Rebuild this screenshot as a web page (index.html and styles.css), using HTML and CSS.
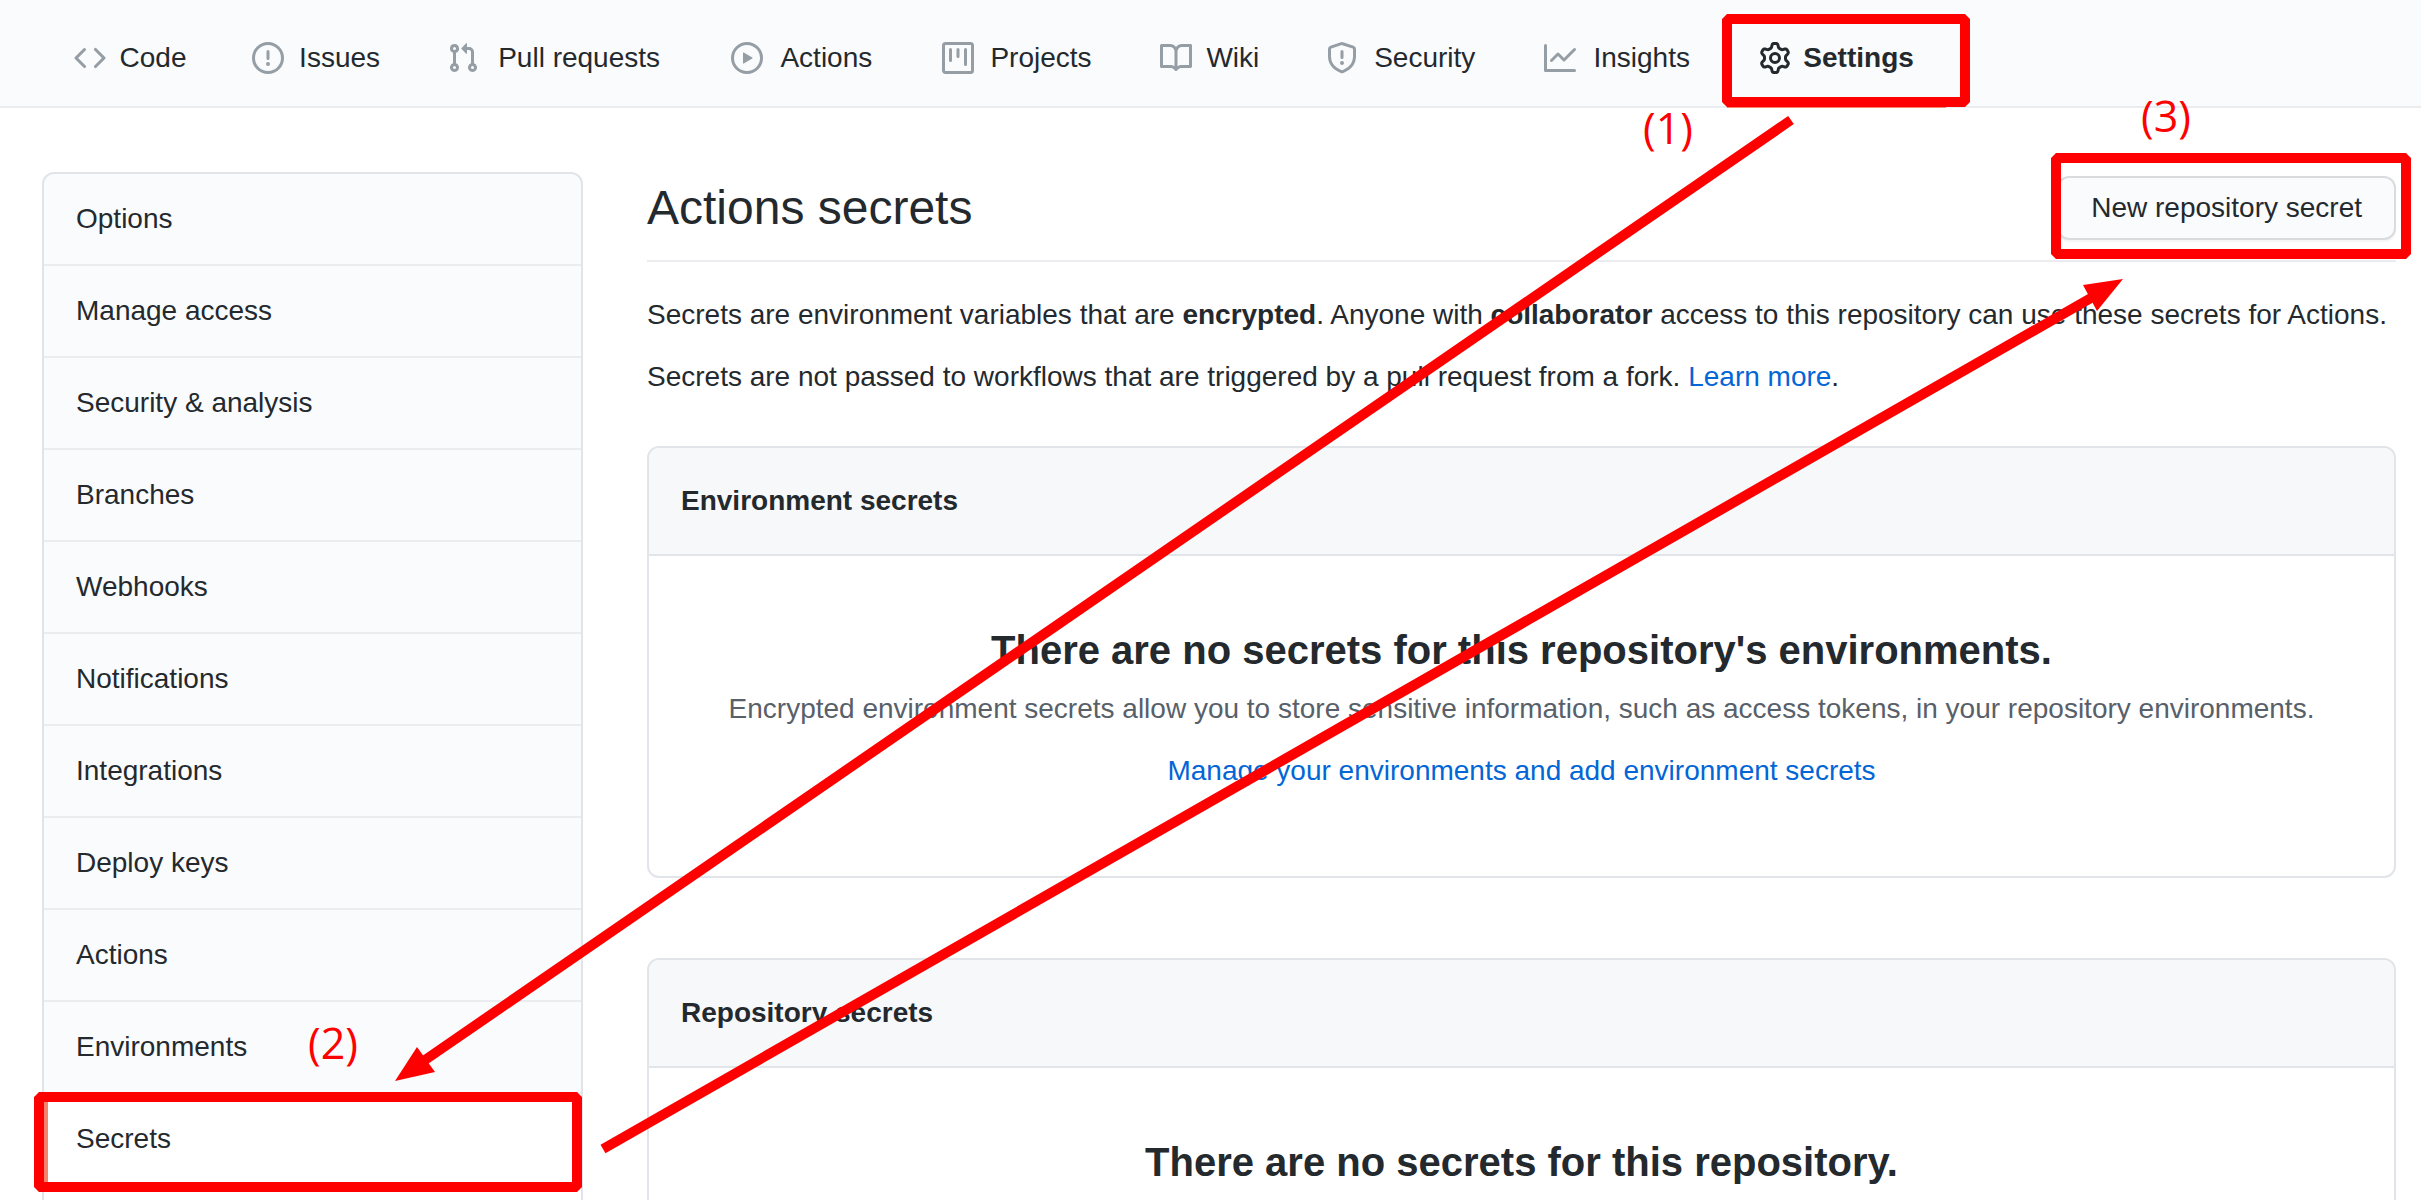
FILE: index.html
```html
<!DOCTYPE html>
<html lang="en">
<head>
<meta charset="utf-8">
<title>Actions secrets</title>
<link rel="stylesheet" href="styles.css">
</head>
<body>
<div class="page">
  <header class="repo-head">
    <nav class="tabs" aria-label="Repository">
      <a class="tab" href="#code"><svg class="icon" viewBox="0 0 16 16" aria-hidden="true"><path d="M4.72 3.22a.75.75 0 011.06 1.06L2.06 8l3.72 3.72a.75.75 0 11-1.06 1.06L.47 8.53a.75.75 0 010-1.06l4.25-4.25zm6.56 0a.75.75 0 10-1.06 1.06L13.94 8l-3.72 3.72a.75.75 0 101.06 1.06l4.25-4.25a.75.75 0 000-1.06l-4.25-4.25z"/></svg><span class="tab-label" data-content="Code">Code</span></a>
      <a class="tab" href="#issues"><svg class="icon" viewBox="0 0 16 16" aria-hidden="true"><path fill-rule="evenodd" d="M8 1.5a6.5 6.5 0 100 13 6.5 6.5 0 000-13zM0 8a8 8 0 1116 0A8 8 0 010 8zm9 3a1 1 0 11-2 0 1 1 0 012 0zm-.25-6.25a.75.75 0 00-1.5 0v3.5a.75.75 0 001.5 0v-3.5z"/></svg><span class="tab-label" data-content="Issues">Issues</span></a>
      <a class="tab" href="#pulls"><svg class="icon" viewBox="0 0 16 16" aria-hidden="true"><path fill-rule="evenodd" d="M7.177 3.073L9.573.677A.25.25 0 0110 .854v4.792a.25.25 0 01-.427.177L7.177 3.427a.25.25 0 010-.354zM3.75 2.5a.75.75 0 100 1.5.75.75 0 000-1.5zm-2.25.75a2.25 2.25 0 113 2.122v5.256a2.251 2.251 0 11-1.5 0V5.372A2.25 2.25 0 011.5 3.25zM11 2.5h-1V4h1a1 1 0 011 1v5.628a2.251 2.251 0 101.5 0V5A2.5 2.5 0 0011 2.5zm1 10.25a.75.75 0 111.5 0 .75.75 0 01-1.5 0zM3.75 12a.75.75 0 100 1.5.75.75 0 000-1.5z"/></svg><span class="tab-label" data-content="Pull requests">Pull requests</span></a>
      <a class="tab" href="#actions"><svg class="icon" viewBox="0 0 16 16" aria-hidden="true"><path fill-rule="evenodd" d="M1.5 8a6.5 6.5 0 1113 0 6.5 6.5 0 01-13 0zM8 0a8 8 0 100 16A8 8 0 008 0zM6.379 5.227A.25.25 0 006 5.442v5.117a.25.25 0 00.379.214l4.264-2.559a.25.25 0 000-.428L6.379 5.227z"/></svg><span class="tab-label" data-content="Actions">Actions</span></a>
      <a class="tab" href="#projects"><svg class="icon" viewBox="0 0 16 16" aria-hidden="true"><path fill-rule="evenodd" d="M1.75 0A1.75 1.75 0 000 1.75v12.5C0 15.216.784 16 1.75 16h12.5A1.75 1.75 0 0016 14.25V1.75A1.75 1.75 0 0014.25 0H1.75zM1.5 1.75a.25.25 0 01.25-.25h12.5a.25.25 0 01.25.25v12.5a.25.25 0 01-.25.25H1.75a.25.25 0 01-.25-.25V1.75zM11.75 3a.75.75 0 00-.75.75v7.5a.75.75 0 001.5 0v-7.5a.75.75 0 00-.75-.75zm-8.25.75a.75.75 0 011.5 0v5.5a.75.75 0 01-1.5 0v-5.5zM8 3a.75.75 0 00-.75.75v3.5a.75.75 0 001.5 0v-3.5A.75.75 0 008 3z"/></svg><span class="tab-label" data-content="Projects">Projects</span></a>
      <a class="tab" href="#wiki"><svg class="icon" viewBox="0 0 16 16" aria-hidden="true"><path fill-rule="evenodd" d="M0 1.75A.75.75 0 01.75 1h4.253c1.227 0 2.317.59 3 1.501A3.744 3.744 0 0111.006 1h4.245a.75.75 0 01.75.75v10.5a.75.75 0 01-.75.75h-4.507a2.25 2.25 0 00-1.591.659l-.622.621a.75.75 0 01-1.06 0l-.622-.621A2.25 2.25 0 005.258 13H.75a.75.75 0 01-.75-.75V1.75zm8.755 3a2.25 2.25 0 012.25-2.25H14.5v9h-3.757c-.71 0-1.4.201-1.992.572l.004-7.322zm-1.504 7.324l.004-5.073-.002-2.253A2.25 2.25 0 005.003 2.5H1.5v9h3.757a3.75 3.75 0 011.994.574z"/></svg><span class="tab-label" data-content="Wiki">Wiki</span></a>
      <a class="tab" href="#security"><svg class="icon" viewBox="0 0 16 16" aria-hidden="true"><path fill-rule="evenodd" d="M7.467.133a1.75 1.75 0 011.066 0l5.25 1.68A1.75 1.75 0 0115 3.48V7c0 1.566-.32 3.182-1.303 4.682-.983 1.498-2.585 2.813-5.032 3.855a1.7 1.7 0 01-1.33 0c-2.447-1.042-4.049-2.357-5.032-3.855C1.32 10.182 1 8.566 1 7V3.48a1.75 1.75 0 011.217-1.667l5.25-1.68zm.61 1.429a.25.25 0 00-.153 0l-5.25 1.68a.25.25 0 00-.174.238V7c0 1.358.275 2.666 1.057 3.86.784 1.194 2.121 2.34 4.366 3.297a.2.2 0 00.154 0c2.245-.956 3.582-2.104 4.366-3.298C13.225 9.666 13.5 8.36 13.5 7V3.48a.25.25 0 00-.174-.237l-5.25-1.68zM9 10.5a1 1 0 11-2 0 1 1 0 012 0zm-.25-5.75a.75.75 0 10-1.5 0v3a.75.75 0 001.5 0v-3z"/></svg><span class="tab-label" data-content="Security">Security</span></a>
      <a class="tab" href="#insights"><svg class="icon" viewBox="0 0 16 16" aria-hidden="true"><path fill-rule="evenodd" d="M1.5 1.75a.75.75 0 00-1.5 0v12.5c0 .414.336.75.75.75h14.5a.75.75 0 000-1.5H1.5V1.75zm14.28 2.53a.75.75 0 00-1.06-1.06L10 7.94 7.53 5.47a.75.75 0 00-1.06 0L3.22 8.72a.75.75 0 001.06 1.06L7 7.06l2.47 2.47a.75.75 0 001.06 0l5.25-5.25z"/></svg><span class="tab-label" data-content="Insights">Insights</span></a>
      <a class="tab selected" href="#settings" aria-current="page"><svg class="icon" viewBox="0 0 16 16" aria-hidden="true"><path fill-rule="evenodd" d="M7.429 1.525a6.593 6.593 0 011.142 0c.036.003.108.036.137.146l.289 1.105c.147.56.55.967.997 1.189.174.086.341.183.501.29.417.278.97.423 1.53.27l1.102-.303c.11-.03.175.016.195.046.219.31.41.641.573.989.014.031.022.11-.059.19l-.815.806c-.411.406-.562.957-.53 1.456a4.588 4.588 0 010 .582c-.032.499.119 1.05.53 1.456l.815.806c.08.08.073.159.059.19a6.494 6.494 0 01-.573.99c-.02.029-.086.074-.195.045l-1.103-.303c-.559-.153-1.112-.008-1.529.27-.16.107-.327.204-.5.29-.449.222-.851.628-.998 1.189l-.289 1.105c-.029.11-.101.143-.137.146a6.613 6.613 0 01-1.142 0c-.036-.003-.108-.037-.137-.146l-.289-1.105c-.147-.56-.55-.967-.997-1.189a4.502 4.502 0 01-.501-.29c-.417-.278-.97-.423-1.53-.27l-1.102.303c-.11.03-.175-.016-.195-.046a6.492 6.492 0 01-.573-.989c-.014-.031-.022-.11.059-.19l.815-.806c.411-.406.562-.957.53-1.456a4.587 4.587 0 010-.582c.032-.499-.119-1.05-.53-1.456l-.815-.806c-.08-.08-.073-.159-.059-.19a6.44 6.44 0 01.573-.99c.02-.029.086-.075.195-.045l1.103.303c.559.153 1.112.008 1.529-.27.16-.107.327-.204.5-.29.449-.222.851-.628.998-1.189l.289-1.105c.029-.11.101-.143.137-.146zM8 0c-.236 0-.47.01-.701.03-.743.065-1.29.615-1.458 1.261l-.29 1.106c-.017.066-.078.158-.211.224a5.994 5.994 0 00-.668.386c-.123.082-.233.09-.3.071L3.27 2.776c-.644-.177-1.392.02-1.82.63a7.977 7.977 0 00-.704 1.217c-.315.675-.111 1.422.363 1.891l.815.806c.05.048.098.147.088.294a6.084 6.084 0 000 .772c.01.147-.038.246-.088.294l-.815.806c-.474.469-.678 1.216-.363 1.891.2.428.436.835.704 1.218.428.609 1.176.806 1.82.63l1.103-.303c.066-.019.176-.011.299.071.213.143.436.272.668.386.133.066.194.158.212.224l.289 1.106c.169.646.715 1.196 1.458 1.26a8.094 8.094 0 001.402 0c.743-.064 1.29-.614 1.458-1.26l.29-1.106c.017-.066.078-.158.211-.224a5.98 5.98 0 00.668-.386c.123-.082.233-.09.3-.071l1.102.302c.644.177 1.392-.02 1.82-.63.268-.382.505-.789.704-1.217.315-.675.111-1.422-.364-1.891l-.814-.806c-.05-.048-.098-.147-.088-.294a6.1 6.1 0 000-.772c-.01-.147.039-.246.088-.294l.814-.806c.475-.469.679-1.216.364-1.891a7.992 7.992 0 00-.704-1.218c-.428-.609-1.176-.806-1.82-.63l-1.103.303c-.066.019-.176.011-.299-.071a5.991 5.991 0 00-.668-.386c-.133-.066-.194-.158-.212-.224L10.16 1.29C9.99.645 9.444.095 8.701.031A8.094 8.094 0 008 0zm1.5 8a1.5 1.5 0 11-3 0 1.5 1.5 0 013 0zM11 8a3 3 0 11-6 0 3 3 0 016 0z"/></svg><span class="tab-label" data-content="Settings">Settings</span></a>
    </nav>
  </header>

  <div class="layout">
    <nav class="menu" aria-label="Settings">
      <a class="menu-item" href="#options">Options</a>
      <a class="menu-item" href="#access">Manage access</a>
      <a class="menu-item" href="#analysis">Security &amp; analysis</a>
      <a class="menu-item" href="#branches">Branches</a>
      <a class="menu-item" href="#hooks">Webhooks</a>
      <a class="menu-item" href="#notifications">Notifications</a>
      <a class="menu-item" href="#integrations">Integrations</a>
      <a class="menu-item" href="#keys">Deploy keys</a>
      <a class="menu-item" href="#actions-settings">Actions</a>
      <a class="menu-item" href="#environments">Environments</a>
      <a class="menu-item current" href="#secrets" aria-current="page">Secrets</a>
      <div class="menu-group"></div>
    </nav>

    <main class="content">
      <div class="subhead">
        <h1 class="subhead-title">Actions secrets</h1>
        <button class="btn" type="button">New repository secret</button>
      </div>
      <div class="intro">
        <p>Secrets are environment variables that are <strong>encrypted</strong>. Anyone with <strong>collaborator</strong> access to this repository can use these secrets for Actions.</p>
        <p>Secrets are not passed to workflows that are triggered by a pull request from a fork. <a href="#learn">Learn more</a>.</p>
      </div>
      <section class="box">
        <h2 class="box-header">Environment secrets</h2>
        <div class="blankslate">
          <h3>There are no secrets for this repository's environments.</h3>
          <p>Encrypted environment secrets allow you to store sensitive information, such as access tokens, in your repository environments.</p>
          <p><a href="#manage">Manage your environments and add environment secrets</a></p>
        </div>
      </section>
      <section class="box">
        <h2 class="box-header">Repository secrets</h2>
        <div class="blankslate">
          <h3>There are no secrets for this repository.</h3>
        </div>
      </section>
    </main>
  </div>

  <!-- Walkthrough marks drawn over the page -->
  <svg class="marks" aria-hidden="true">
    <g class="frames">
      <rect x="1727" y="19" width="238" height="83"/>
      <rect x="2056" y="158" width="350" height="96"/>
      <rect x="39" y="1097" width="538" height="90"/>
    </g>
    <path class="shaft" d="M1791 120 425 1060M603 1149 2091 298"/>
    <path class="head" d="M395 1081 417 1047 435 1072zM2123 279 2083 285 2097 311z"/>
    <g class="steps">
      <text x="1643" y="144">(1)</text>
      <text x="308" y="1059">(2)</text>
      <text x="2141" y="132">(3)</text>
    </g>
  </svg>
</div>
</body>
</html>
```

FILE: styles.css
```css
* {
  box-sizing: border-box;
}

body {
  margin: 0;
  background: #fff;
  color: #24292e;
  font: 28px/42px "Liberation Sans", Arial, sans-serif;
}

a {
  color: #0366d6;
  text-decoration: none;
}

h1, h2, h3, p {
  margin: 0;
}

.page {
  position: relative;
  height: 100vh;
  overflow: hidden;
}

/* Repository tabs */
.repo-head {
  padding: 0 42px;
  background: #fafbfc;
  border-bottom: 2px solid #eaecef;
}

.tabs {
  display: flex;
  margin-bottom: -2px;
}

.tab {
  display: flex;
  align-items: center;
  gap: 12px;
  padding: 12px 32px 0;
  height: 108px;
  border-bottom: 4px solid transparent;
  color: #24292e;
  white-space: nowrap;
}

.tab.selected {
  border-bottom-color: #f9826c;
  font-weight: bold;
}

.icon {
  flex: none;
  width: 32px;
  height: 32px;
  fill: #959da5;
}

.selected .icon {
  fill: #24292e;
}

.tab-label {
  text-align: center;
}

/* Reserves the bold width so tabs do not shift when selected */
.tab-label::before {
  display: block;
  height: 0;
  font-weight: bold;
  visibility: hidden;
  content: attr(data-content);
}

/* Two-column body */
.layout {
  display: grid;
  grid-template-columns: 541px minmax(0, 1fr);
  align-items: start;
  gap: 64px;
  padding: 64px 25px 64px 42px;
}

.menu {
  overflow: hidden;
  background: #fafbfc;
  border: 2px solid #e1e4e8;
  border-radius: 12px;
}

.menu-item {
  display: block;
  padding: 24px 32px;
  border-bottom: 2px solid #eaecef;
  color: #24292e;
}

.menu-item.current {
  background: #fff;
  box-shadow: inset 4px 0 #f9826c;
}

.menu-group {
  min-height: 92px;
  background: #fff;
}

.subhead {
  display: flex;
  align-items: center;
  justify-content: space-between;
  padding-bottom: 16px;
  margin-bottom: 32px;
  border-bottom: 2px solid #eaecef;
}

.subhead-title {
  font-size: 48px;
  font-weight: normal;
  line-height: 72px;
}

.btn {
  padding: 10px 32px;
  border: 2px solid #d9dbdd;
  border-radius: 12px;
  background: #fafbfc;
  box-shadow: 0 2px 0 rgba(27, 31, 35, 0.04);
  color: #24292e;
  font: inherit;
  line-height: 40px;
}

.intro {
  display: grid;
  gap: 20px;
  margin-bottom: 48px;
}

.box {
  margin-bottom: 80px;
  overflow: hidden;
  border: 2px solid #e1e4e8;
  border-radius: 12px;
}

.box-header {
  padding: 32px;
  background: #f6f8fa;
  border-bottom: 2px solid #e1e4e8;
  font-size: 28px;
  line-height: 42px;
}

.blankslate {
  padding: 64px;
  color: #586069;
  text-align: center;
}

.blankslate h3 {
  margin-bottom: 8px;
  color: #24292e;
  font-size: 40px;
  line-height: 60px;
}

.blankslate p {
  margin-bottom: 20px;
}

/* Numbered walkthrough */
.marks {
  position: absolute;
  top: 0;
  left: 0;
  width: 100%;
  height: 100%;
  pointer-events: none;
}

.frames {
  fill: none;
  stroke: #f00;
  stroke-width: 10px;
  stroke-linejoin: bevel;
}

.shaft {
  fill: none;
  stroke: #f00;
  stroke-width: 10px;
}

.head {
  fill: #f00;
}

.steps {
  fill: #f00;
  font: 43px "Open Sans", "Noto Sans", sans-serif;
}
```
